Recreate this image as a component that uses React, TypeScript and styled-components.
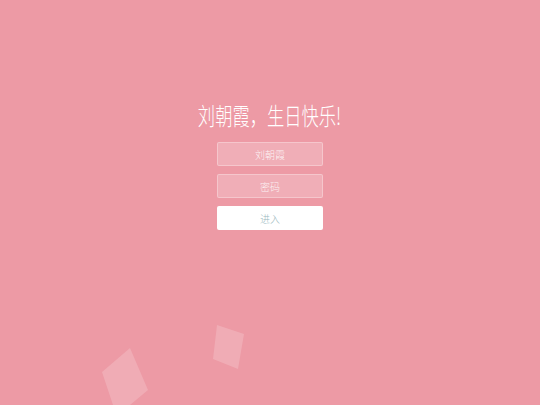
import React from "react"
import styled, { createGlobalStyle } from "styled-components"

const GlobalStyle = createGlobalStyle`
	html, body {
		margin: 0;
		padding: 0;
		height: 100%;
		background: #ed9aa5;
	}
	#root {
		height: 100%;
	}
`

const Page = styled.div`
	position: relative;
	width: 100%;
	height: 405px;
	overflow: hidden;
	background: #ed9aa5;
	font-family: "Noto Sans CJK SC", "Noto Sans", sans-serif;
`

const Container = styled.div`
	display: flex;
	flex-direction: column;
	align-items: center;
	padding-top: 99px;
`

const Title = styled.h1`
	margin: 0;
	color: #fff;
	font-size: 24px;
	font-weight: 300;
	line-height: 31px;
	transform: scaleX(0.72);
	white-space: nowrap;
`

const Form = styled.form`
	display: flex;
	flex-direction: column;
	gap: 8px;
	margin-top: 12px;
	width: 106px;
`

const Input = styled.input`
	box-sizing: border-box;
	width: 100%;
	height: 24px;
	border: 1px solid rgba(255, 255, 255, 0.3);
	background: rgba(255, 255, 255, 0.2);
	border-radius: 2px;
	text-align: center;
	color: #fff;
	font-family: inherit;
	font-size: 10px;
	font-weight: 300;
	outline: none;

	&::placeholder {
		color: rgba(255, 255, 255, 0.85);
	}
`

const Button = styled.button`
	box-sizing: border-box;
	width: 100%;
	height: 24px;
	border: 0;
	border-radius: 2px;
	background: #fff;
	color: #9ab8bd;
	font-family: inherit;
	font-size: 10px;
	font-weight: 300;
	cursor: pointer;
`

const Bubble = styled.div<{ $shape: string }>`
	position: absolute;
	inset: 0;
	background: rgba(255, 255, 255, 0.18);
	clip-path: ${(p) => p.$shape};
	pointer-events: none;
`

const App: React.FC = () => {
	return (
		<>
			<GlobalStyle />
			<Page>
				<Container>
					<Title>刘朝霞，生日快乐!</Title>
					<Form onSubmit={(e) => e.preventDefault()}>
						<Input type="text" placeholder="刘朝霞" />
						<Input type="password" placeholder="密码" />
						<Button type="submit">进入</Button>
					</Form>
				</Container>
				<Bubble $shape="polygon(217px 325px, 244px 334px, 238px 369px, 213px 359px)" />
				<Bubble $shape="polygon(130px 348px, 148px 390px, 130px 405px, 113px 405px, 102px 372px)" />
			</Page>
		</>
	)
}

export default App
